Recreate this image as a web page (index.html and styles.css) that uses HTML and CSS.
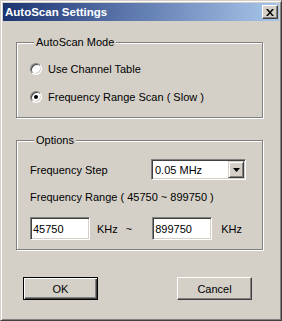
FILE: index.html
```html
<!DOCTYPE html>
<html lang="en">
<head>
  <meta charset="UTF-8" />
  <title>AutoScan Settings</title>
  <link rel="stylesheet" href="styles.css">
</head>
<body>
  <div class="window">
    <!-- title bar -->
    <div class="titlebar">
      <span class="title">AutoScan Settings</span>
      <button class="close" type="button">
        <svg width="8" height="7" viewBox="0 0 8 7"><path d="M0 0h2l2 2.5 2-2.5h2l-3 3.5 3 3.5h-2l-2-2.5-2 2.5h-2l3-3.5z" fill="#000"/></svg>
      </button>
    </div>

    <div class="client">
      <fieldset class="group group-mode">
        <legend>AutoScan Mode</legend>
        <label class="radio-row"><span class="radio"></span>Use Channel Table</label>
        <label class="radio-row"><span class="radio checked"></span>Frequency Range Scan ( Slow )</label>
      </fieldset>

      <fieldset class="group group-options">
        <legend>Options</legend>
        <div class="step-row">
          <span class="step-label">Frequency Step</span>
          <div class="combo">
            <span class="combo-value">0.05 MHz</span>
            <span class="combo-btn">
              <svg width="7" height="4" viewBox="0 0 7 4"><path d="M0 0h7l-3.5 4z" fill="#000"/></svg>
            </span>
          </div>
        </div>
        <div class="range-label">Frequency Range ( 45750 ~ 899750 )</div>
        <div class="range-row">
          <span class="edit">45750</span>
          <span class="unit">KHz</span>
          <span class="tilde">~</span>
          <span class="edit edit-to">899750</span>
          <span class="unit unit-to">KHz</span>
        </div>
      </fieldset>

      <div class="buttons">
        <button class="btn default" type="button">OK</button>
        <button class="btn cancel" type="button">Cancel</button>
      </div>
    </div>
  </div>
</body>
</html>
```

FILE: styles.css
```css
body {
  margin: 0;
  font-family: "Liberation Sans", Arial, sans-serif;
  font-size: 11px;
  color: #000;
  background: #d4d0c8;
}

.window {
  width: 282px;
  height: 321px;
  box-sizing: border-box;
  background: #d4d0c8;
  border: 1px solid;
  border-color: #d4d0c8 #404040 #404040 #d4d0c8;
  box-shadow: inset 1px 1px 0 #fff, inset -1px -1px 0 #808080;
  padding: 2px;
}

/* title bar */
.titlebar {
  height: 18px;
  display: flex;
  align-items: center;
  padding: 0 1px 0 2px;
  background: linear-gradient(to right, #1a3470, #5b77ac 45%, #a8c6ea);
}
.title {
  color: #fff;
  font-weight: bold;
  font-size: 11.5px;
}
.close {
  margin-left: auto;
  width: 16px;
  height: 14px;
  box-sizing: border-box;
  padding: 0;
  display: flex;
  align-items: center;
  justify-content: center;
  background: #d4d0c8;
  border: 1px solid;
  border-color: #fff #404040 #404040 #fff;
  box-shadow: inset -1px -1px 0 #808080;
}

/* group boxes */
.group {
  margin: 15px 0 0 13px;
  width: 247px;
  box-sizing: border-box;
  min-width: 0;
  border: 1px solid #808080;
  box-shadow: inset 1px 1px 0 #fff, 1px 1px 0 #fff;
  padding: 10px 0 10px 13px;
}
.group legend {
  margin-left: 4px;
  padding: 0 2px;
  line-height: 13px;
  background: #d4d0c8;
}
.group-options {
  margin-top: 16px;
  padding: 12px 0 9px 13px;
}

.radio-row {
  display: flex;
  align-items: center;
  gap: 6px;
  height: 20px;
}
.radio-row + .radio-row {
  margin-top: 8px;
}
.radio {
  width: 12px;
  height: 12px;
  box-sizing: border-box;
  border-radius: 50%;
  border: 1px solid;
  border-color: #808080 #fff #fff #808080;
  background: #fff;
  box-shadow: inset 1px 1px 0 #404040, inset -1px -1px 0 #d4d0c8;
  display: flex;
  align-items: center;
  justify-content: center;
}
.radio.checked::after {
  content: "";
  width: 4px;
  height: 4px;
  border-radius: 50%;
  background: #000;
}

/* sunken fields */
.combo,
.edit {
  box-sizing: border-box;
  border: 1px solid;
  border-color: #808080 #fff #fff #808080;
  box-shadow: inset 1px 1px 0 #404040, inset -1px -1px 0 #d4d0c8;
  background: #fff;
}

.step-row {
  display: flex;
  align-items: center;
  height: 21px;
}
.step-label {
  width: 121px;
}
.combo {
  width: 95px;
  height: 21px;
  display: flex;
  align-items: center;
  padding: 1px;
}
.combo-value {
  flex: 1;
  padding-left: 2px;
}
.combo-btn {
  width: 16px;
  height: 17px;
  box-sizing: border-box;
  display: flex;
  align-items: center;
  justify-content: center;
  background: #d4d0c8;
  border: 1px solid;
  border-color: #d4d0c8 #404040 #404040 #d4d0c8;
  box-shadow: inset 1px 1px 0 #fff, inset -1px -1px 0 #808080;
}

.range-label {
  margin-top: 10px;
  line-height: 14px;
}
.range-row {
  margin-top: 13px;
  display: flex;
  align-items: center;
  height: 23px;
}
.edit {
  width: 60px;
  height: 23px;
  padding-left: 2px;
  display: flex;
  align-items: center;
}
.unit {
  margin-left: 7px;
}
.tilde {
  margin-left: 8px;
}
.edit-to {
  margin-left: 20px;
}
.unit-to {
  margin-left: 9px;
}

/* dialog buttons */
.buttons {
  display: flex;
  gap: 79px;
  margin: 27px 0 0 20px;
}
.btn {
  width: 75px;
  height: 23px;
  box-sizing: border-box;
  padding: 0;
  font-family: inherit;
  font-size: 11px;
  color: #000;
  background: #d4d0c8;
  border: 1px solid;
  border-color: #fff #404040 #404040 #fff;
  box-shadow: inset -1px -1px 0 #808080;
}
.btn.default {
  border-color: #000;
  box-shadow: inset 1px 1px 0 #fff, inset -1px -1px 0 #404040, inset -2px -2px 0 #808080;
}
```
